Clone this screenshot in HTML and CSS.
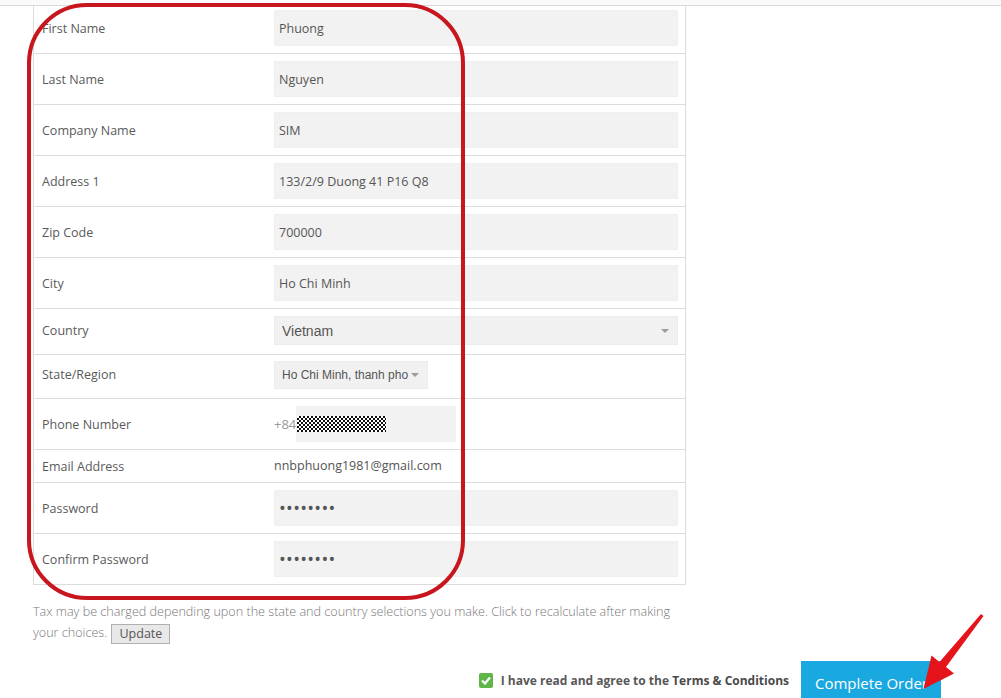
FILE: index.html
```html
<!DOCTYPE html>
<html lang="en">
<head>
  <meta charset="UTF-8" />
  <meta name="viewport" content="width=device-width, initial-scale=1.0"/>
  <title>Checkout - Account Details</title>
  <link rel="stylesheet" href="styles.css">
</head>
<body>

  <div class="topbar"></div>

  <div class="page">
    <table class="form-table">
      <tr>
        <th>First Name</th>
        <td><input type="text" class="field" value="Phuong" /></td>
      </tr>
      <tr>
        <th>Last Name</th>
        <td><input type="text" class="field" value="Nguyen" /></td>
      </tr>
      <tr>
        <th>Company Name</th>
        <td><input type="text" class="field" value="SIM" /></td>
      </tr>
      <tr>
        <th>Address 1</th>
        <td><input type="text" class="field" value="133/2/9 Duong 41 P16 Q8" /></td>
      </tr>
      <tr>
        <th>Zip Code</th>
        <td><input type="text" class="field" value="700000" /></td>
      </tr>
      <tr>
        <th>City</th>
        <td><input type="text" class="field" value="Ho Chi Minh" /></td>
      </tr>
      <tr class="row-country">
        <th>Country</th>
        <td>
          <span class="select-wrap select-wide">
            <select class="select"><option>Vietnam</option></select>
          </span>
        </td>
      </tr>
      <tr class="row-state">
        <th>State/Region</th>
        <td>
          <span class="select-wrap select-small">
            <select class="select"><option>Ho Chi Minh, thanh pho</option></select>
          </span>
        </td>
      </tr>
      <tr>
        <th>Phone Number</th>
        <td>
          <div class="phone">
            <span class="phone-prefix">+84</span>
            <span class="phone-box"><span class="redact"></span></span>
          </div>
        </td>
      </tr>
      <tr class="row-text">
        <th>Email Address</th>
        <td>nnbphuong1981@gmail.com</td>
      </tr>
      <tr>
        <th>Password</th>
        <td><input type="password" class="field field-pass" value="12345678" /></td>
      </tr>
      <tr>
        <th>Confirm Password</th>
        <td><input type="password" class="field field-pass" value="12345678" /></td>
      </tr>
    </table>

    <p class="tax-note">
      Tax may be charged depending upon the state and country selections you make. Click to recalculate after making your choices.
      <button class="btn-update">Update</button>
    </p>
  </div>

  <div class="order-row">
    <label class="agree">
      <span class="check">
        <svg width="10" height="9" viewBox="0 0 10 9"><path d="M1 4.5 L4 7.5 L9 1.5" fill="none" stroke="#fff" stroke-width="2.2"/></svg>
      </span>
      <span>I have read and agree to the <span class="terms">Terms &amp; Conditions</span></span>
    </label>
    <button class="btn-complete">Complete Order</button>
  </div>

  <!-- annotations drawn over the screenshot -->
  <div class="highlight"></div>
  <svg class="arrow" width="1001" height="698" viewBox="0 0 1001 698">
    <polygon points="981,614 983.5,616 946,667 954,673.5 923.5,689 931.5,655.5 939.5,662" fill="#e5141b"/>
  </svg>

</body>
</html>
```

FILE: styles.css
```css
* { box-sizing: border-box; }
body {
  margin: 0;
  background: white;
  font-family: "Open Sans", "Liberation Sans", sans-serif;
  font-size: 13px;
  color: #555;
  position: relative;
  height: 698px;
  overflow: hidden;
}
.topbar {
  height: 6px;
  background: #fafafa;
  border-bottom: 1px solid #d9d9d9;
}
.page {
  padding-left: 33px;
  width: 686px;
}
.form-table {
  width: 653px;
  border-collapse: separate;
  border-spacing: 0;
  border: 1px solid #dcdcdc;
  border-top: none;
}
.form-table th,
.form-table td {
  padding: 7px 7px;
  vertical-align: middle;
  line-height: 18px;
}
.form-table th {
  width: 233px;
  padding-left: 8px;
  padding-top: 8px;
  padding-bottom: 6px;
  text-align: left;
  font-weight: normal;
  font-size: 12.5px;
  color: #5a5a5a;
}
.form-table tr + tr th,
.form-table tr + tr td {
  border-top: 1px solid #dcdcdc;
}
.form-table tr:first-child td {
  padding-top: 4px;
}
.form-table tr:first-child th {
  padding-top: 5px;
}
.field {
  display: block;
  width: 100%;
  height: 36px;
  padding: 0 4px;
  border: 1px solid #efefef;
  background: #f2f2f2;
  font-family: "Open Sans", "Liberation Sans", sans-serif;
  font-size: 12.5px;
  color: #555;
  outline: none;
}
.field-pass {
  padding-left: 4px;
  font-size: 18px;
  letter-spacing: 0.3px;
}
.row-country th, .row-country td { padding-bottom: 9px; }
.row-state th, .row-state td { padding-top: 6px; padding-bottom: 9px; }
.select-wrap {
  position: relative;
  display: block;
  background: #f1f1f1;
  border: 1px solid #ececec;
}
.select-wrap::after {
  content: "";
  position: absolute;
  top: 50%;
  right: 8px;
  margin-top: -2px;
  border-left: 4px solid transparent;
  border-right: 4px solid transparent;
  border-top: 4px solid #9c9c9c;
}
.select-wide { width: 404px; height: 29px; }
.select-small { width: 154px; height: 28px; }
.select {
  appearance: none;
  -webkit-appearance: none;
  width: 100%;
  height: 100%;
  border: none;
  background: transparent;
  padding: 0 18px 0 7px;
  font-family: "Liberation Sans", Arial, sans-serif;
  font-size: 14px;
  color: #555;
  outline: none;
}
.select-small .select { font-size: 12px; padding-right: 14px; }
.phone {
  display: flex;
  align-items: center;
}
.phone-prefix {
  width: 22px;
  color: #999;
}
.phone-box {
  display: flex;
  align-items: center;
  width: 160px;
  height: 36px;
  background: #f2f2f2;
}
.redact {
  width: 89px;
  height: 16px;
  margin-left: 1px;
  background: repeating-conic-gradient(#111 0 25%, #fff 0 50%) 0 0 / 4px 4px;
}
.row-text td { color: #555; font-size: 12.5px; }
.tax-note {
  margin: 16px 0 0;
  width: 653px;
  line-height: 21px;
  font-size: 12.6px;
  font-weight: 300;
  color: #777;
}
.btn-update {
  height: 20px;
  padding: 0 7px;
  margin-left: 1px;
  border: 1px solid #b0b0b0;
  border-radius: 0;
  background: #e8e8e8;
  font-family: "Open Sans", "Liberation Sans", sans-serif;
  font-size: 12.5px;
  line-height: 18px;
  color: #555;
  vertical-align: middle;
}
.order-row {
  display: flex;
  justify-content: flex-end;
  align-items: center;
  gap: 12px;
  margin-top: 17px;
  padding-right: 60px;
}
.agree {
  display: flex;
  align-items: center;
  gap: 8px;
  font-size: 12px;
  font-weight: bold;
  color: #585858;
  margin-top: -4px;
}
.terms { color: #4a4a4a; }
.check {
  display: flex;
  align-items: center;
  justify-content: center;
  width: 14px;
  height: 15px;
  background: #5eb649;
  border-radius: 2px;
}
.btn-complete {
  width: 140px;
  height: 44px;
  border: none;
  background: #1aa8e0;
  color: white;
  font-family: "Open Sans", "Liberation Sans", sans-serif;
  font-size: 15px;
  padding: 0 0 0 14px;
  text-align: left;
  white-space: nowrap;
  overflow: hidden;
}
.highlight {
  position: absolute;
  left: 27px;
  top: 3px;
  width: 438px;
  height: 597px;
  border: 4px solid #c7161d;
  border-radius: 60px;
  pointer-events: none;
}
.arrow {
  position: absolute;
  left: 0;
  top: 0;
  pointer-events: none;
}
```
